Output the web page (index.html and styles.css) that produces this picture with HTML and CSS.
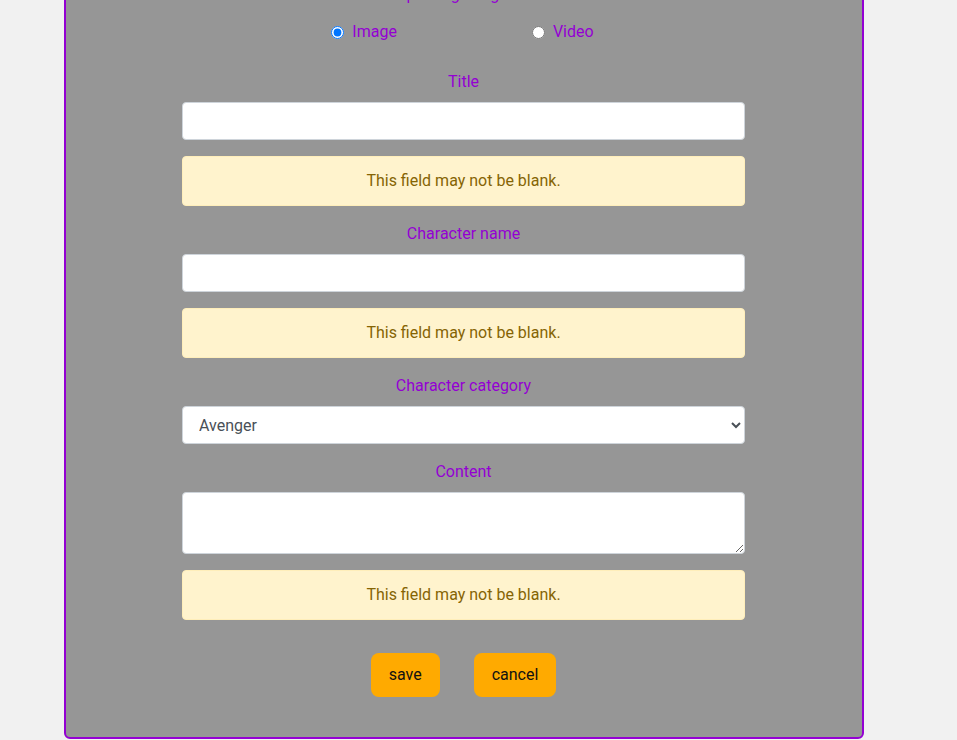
FILE: index.html
```html
<!DOCTYPE html>
<html lang="en">
<head>
<meta charset="utf-8">
<title>Post form</title>
<link rel="stylesheet" href="styles.css">
</head>
<body>
<div class="card">
  <form class="post-form">
    <p class="heading">Select posting image or video</p>
    <div class="radios">
      <label class="radio"><input type="radio" name="kind" checked><span>Image</span></label>
      <label class="radio"><input type="radio" name="kind"><span>Video</span></label>
    </div>

    <label class="field-label first" for="title">Title</label>
    <input class="control" id="title" type="text">
    <div class="alert">This field may not be blank.</div>

    <label class="field-label" for="cname">Character name</label>
    <input class="control" id="cname" type="text">
    <div class="alert">This field may not be blank.</div>

    <label class="field-label" for="ccat">Character category</label>
    <select class="control select" id="ccat">
      <option>Avenger</option>
      <option>Villain</option>
    </select>

    <label class="field-label" for="content">Content</label>
    <textarea class="control textarea" id="content"></textarea>
    <div class="alert">This field may not be blank.</div>

    <div class="buttons">
      <button type="button" class="btn">save</button>
      <button type="button" class="btn">cancel</button>
    </div>
  </form>
</div>
</body>
</html>
```
FILE: styles.css
```css
html, body {
  margin: 0;
  padding: 0;
}
body {
  background: #f1f1f1;
  font-family: Roboto, "Liberation Sans", sans-serif;
  font-size: 16px;
  line-height: 24px;
  color: #212529;
  overflow: hidden;
}
.card {
  box-sizing: border-box;
  width: 800px;
  margin: -60px 0 0 64px;
  padding: 41px 0 40px;
  background: #969696;
  border: 2px solid #9400d3;
  border-radius: 6px;
}
.post-form {
  width: 563px;
  margin: 0 0 0 116px;
  display: flex;
  flex-direction: column;
}
.heading {
  margin: 0;
  text-align: center;
  color: #9400d3;
}
.radios {
  display: flex;
  justify-content: center;
  gap: 135px;
  margin-top: 13px;
  padding-right: 2px;
}
.radio {
  display: flex;
  align-items: center;
  gap: 8px;
  color: #9400d3;
}
.radio input {
  margin: 0;
  width: 13px;
  height: 13px;
}
.field-label {
  display: block;
  text-align: center;
  color: #9400d3;
  margin: 16px 0 8px;
}
.field-label.first {
  margin-top: 26px;
}
.control {
  box-sizing: border-box;
  display: block;
  width: 100%;
  height: 38px;
  padding: 6px 12px;
  font-family: inherit;
  font-size: 16px;
  line-height: 24px;
  color: #495057;
  background: #fff;
  border: 1px solid #ced4da;
  border-radius: 4px;
}
.textarea {
  height: 62px;
  resize: vertical;
}
.alert {
  box-sizing: border-box;
  margin-top: 16px;
  padding: 12px 20px;
  text-align: center;
  background: #fff3cd;
  border: 1px solid #ffeeba;
  border-radius: 4px;
  color: #856404;
}
.buttons {
  display: flex;
  justify-content: center;
  gap: 34px;
  margin-top: 33px;
}
.btn {
  height: 44px;
  padding: 0 18px 2px;
  font-family: inherit;
  font-size: 16px;
  color: #111;
  background: #ffaa00;
  border: none;
  border-radius: 8px;
}
```
